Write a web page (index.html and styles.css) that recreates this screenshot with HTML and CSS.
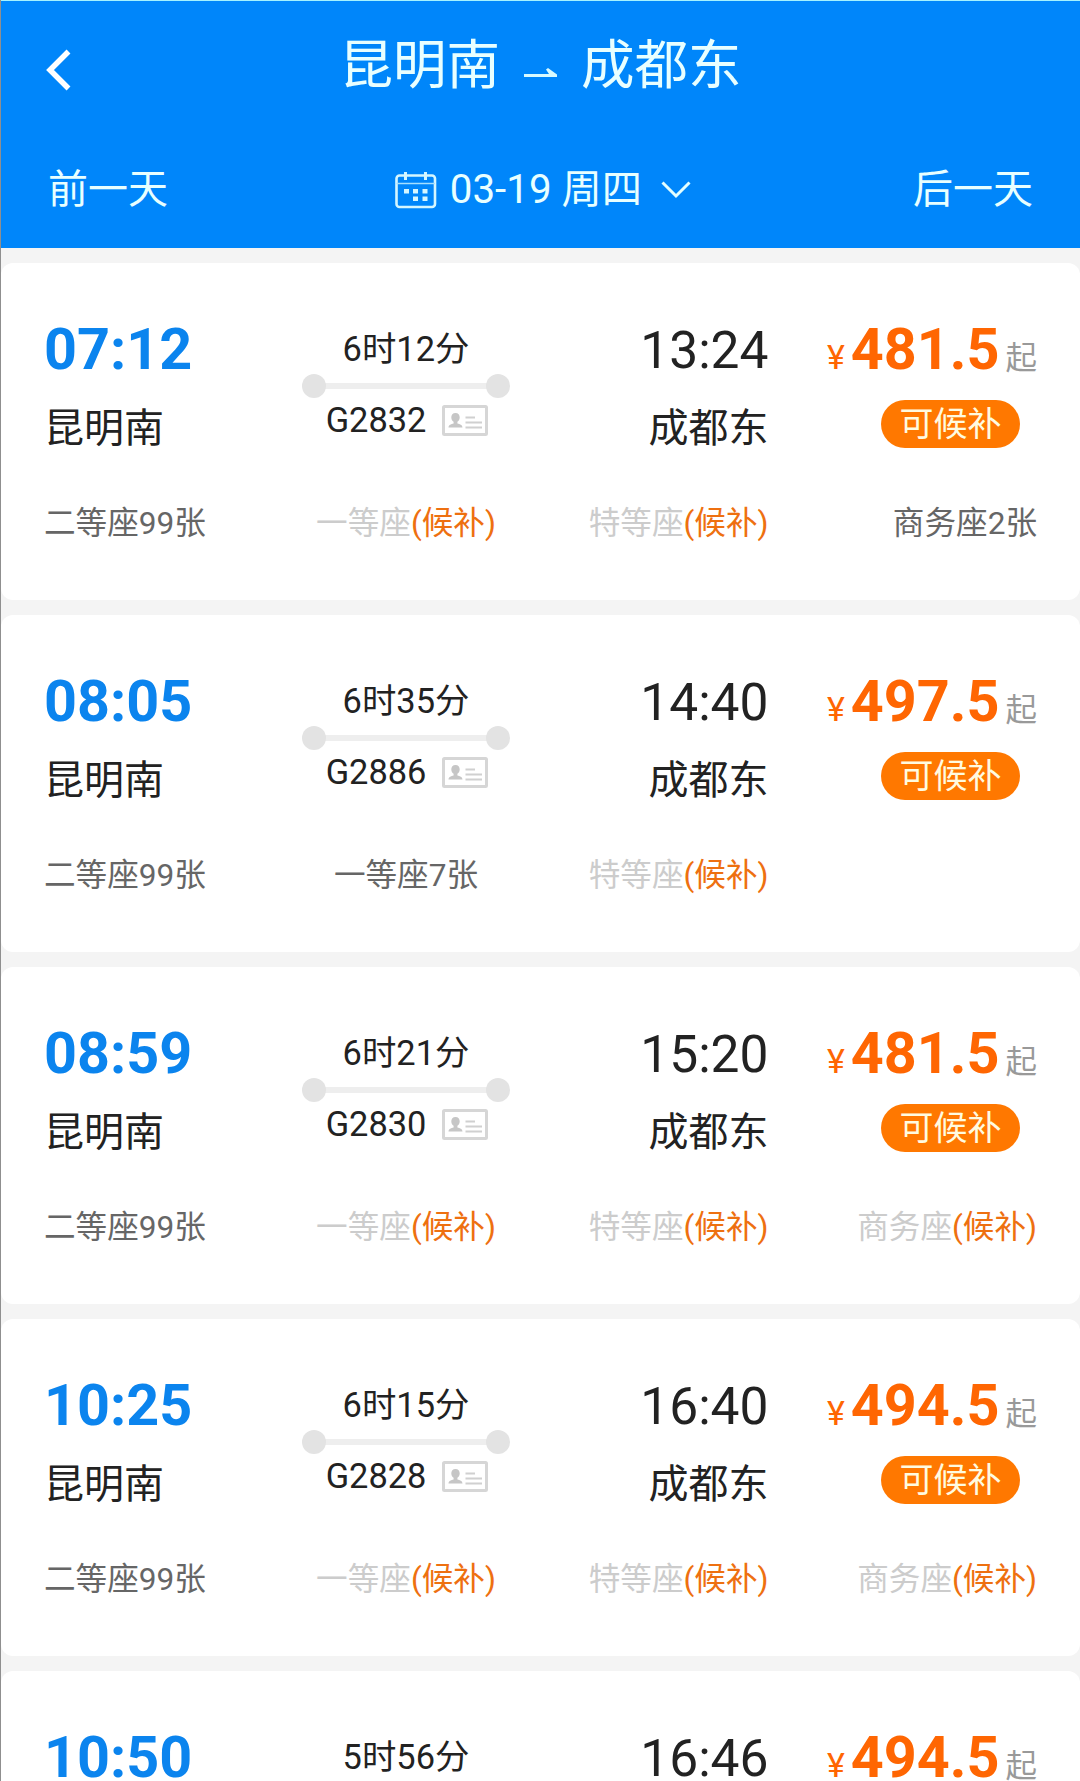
FILE: index.html
```html
<!DOCTYPE html>
<html lang="zh-CN">
<head>
    <meta charset="UTF-8">
    <meta name="viewport" content="width=device-width, initial-scale=1.0">
    <title>昆明南 - 成都东</title>
    <link rel="stylesheet" href="styles.css">
</head>
<body>
    <svg class="symbols" width="0" height="0">
        <symbol id="id-card" viewBox="0 0 46 31">
            <rect x="1.5" y="1.5" width="43" height="28" rx="1" fill="none" stroke="#d6d6d6" stroke-width="3"/>
            <path d="M13.5 8c-2.8 0-4.2 2-4.2 4.3 0 2 .9 3.7 2.3 4.5v1.7C9 19.2 6.5 20 6.5 22.5h14c0-2.5-2.5-3.3-5.1-4v-1.7c1.4-.8 2.3-2.5 2.3-4.5C17.7 10 16.3 8 13.5 8z" fill="#c6c6c6"/>
            <path d="M23.5 12.5h9.5M23.5 17.5h16.5M23.5 22.5h16.5" fill="none" stroke="#d0d0d0" stroke-width="2.2"/>
        </symbol>
    </svg>

    <div class="page">
        <header class="header">
            <div class="title-bar">
                <svg class="back" width="26" height="42" viewBox="0 0 26 42"><path d="M22.5 2.5L4 21l18.5 18.5" fill="none" stroke="#fff" stroke-width="5.5"/></svg>
                <h1 class="route">
                    <span>昆明南</span>
                    <svg class="arrow" width="33" height="10" viewBox="0 0 33 10"><path d="M0 6h25L22 1.5 24 0l9 6.5V9H0z" fill="#d8faff"/></svg>
                    <span>成都东</span>
                </h1>
            </div>
            <div class="date-bar">
                <span class="day">前一天</span>
                <div class="date">
                    <svg width="42" height="38" viewBox="0 0 42 38">
                        <rect x="1.5" y="4.5" width="38.5" height="31.5" rx="3" fill="none" stroke="#d4f6ff" stroke-width="2.6"/>
                        <path d="M1.5 12.5H40" stroke="#a5e0ff" stroke-width="1.5"/>
                        <path d="M10.5 1v8M30.5 1v8" stroke="#d4f6ff" stroke-width="3"/>
                        <path d="M9 18h5v4.5H9zM18 18h5v4.5h-5zM27.5 18h5v4.5h-5zM18 25.5h5V30h-5zM27.5 25.5h5V30h-5z" fill="#d4f6ff"/>
                    </svg>
                    <span class="date-text">03-19 周四</span>
                    <svg width="30" height="18" viewBox="0 0 30 18"><path d="M1.5 1.5L15 15 28.5 1.5" fill="none" stroke="#e4ffff" stroke-width="3"/></svg>
                </div>
                <span class="day">后一天</span>
            </div>
        </header>

        <main class="list">
            <div class="card">
                <div class="train">
                    <div class="depart">
                        <div class="time start">07:12</div>
                        <div class="station">昆明南</div>
                    </div>
                    <div class="trip">
                        <div class="duration">6时12分</div>
                        <div class="line"></div>
                        <div class="number">G2832 <svg width="46" height="31"><use href="#id-card"/></svg></div>
                    </div>
                    <div class="arrive">
                        <div class="time">13:24</div>
                        <div class="station">成都东</div>
                    </div>
                    <div class="fare">
                        <div class="price"><span class="yen">¥</span><b>481.5</b><span class="from">起</span></div>
                        <span class="badge">可候补</span>
                    </div>
                </div>
                <div class="seats">
                    <span>二等座99张</span>
                    <span class="none">一等座<em>(候补)</em></span>
                    <span class="none">特等座<em>(候补)</em></span>
                    <span>商务座2张</span>
                </div>
            </div>

            <div class="card">
                <div class="train">
                    <div class="depart">
                        <div class="time start">08:05</div>
                        <div class="station">昆明南</div>
                    </div>
                    <div class="trip">
                        <div class="duration">6时35分</div>
                        <div class="line"></div>
                        <div class="number">G2886 <svg width="46" height="31"><use href="#id-card"/></svg></div>
                    </div>
                    <div class="arrive">
                        <div class="time">14:40</div>
                        <div class="station">成都东</div>
                    </div>
                    <div class="fare">
                        <div class="price"><span class="yen">¥</span><b>497.5</b><span class="from">起</span></div>
                        <span class="badge">可候补</span>
                    </div>
                </div>
                <div class="seats">
                    <span>二等座99张</span>
                    <span>一等座7张</span>
                    <span class="none">特等座<em>(候补)</em></span>
                </div>
            </div>

            <div class="card">
                <div class="train">
                    <div class="depart">
                        <div class="time start">08:59</div>
                        <div class="station">昆明南</div>
                    </div>
                    <div class="trip">
                        <div class="duration">6时21分</div>
                        <div class="line"></div>
                        <div class="number">G2830 <svg width="46" height="31"><use href="#id-card"/></svg></div>
                    </div>
                    <div class="arrive">
                        <div class="time">15:20</div>
                        <div class="station">成都东</div>
                    </div>
                    <div class="fare">
                        <div class="price"><span class="yen">¥</span><b>481.5</b><span class="from">起</span></div>
                        <span class="badge">可候补</span>
                    </div>
                </div>
                <div class="seats">
                    <span>二等座99张</span>
                    <span class="none">一等座<em>(候补)</em></span>
                    <span class="none">特等座<em>(候补)</em></span>
                    <span class="none">商务座<em>(候补)</em></span>
                </div>
            </div>

            <div class="card">
                <div class="train">
                    <div class="depart">
                        <div class="time start">10:25</div>
                        <div class="station">昆明南</div>
                    </div>
                    <div class="trip">
                        <div class="duration">6时15分</div>
                        <div class="line"></div>
                        <div class="number">G2828 <svg width="46" height="31"><use href="#id-card"/></svg></div>
                    </div>
                    <div class="arrive">
                        <div class="time">16:40</div>
                        <div class="station">成都东</div>
                    </div>
                    <div class="fare">
                        <div class="price"><span class="yen">¥</span><b>494.5</b><span class="from">起</span></div>
                        <span class="badge">可候补</span>
                    </div>
                </div>
                <div class="seats">
                    <span>二等座99张</span>
                    <span class="none">一等座<em>(候补)</em></span>
                    <span class="none">特等座<em>(候补)</em></span>
                    <span class="none">商务座<em>(候补)</em></span>
                </div>
            </div>

            <div class="card">
                <div class="train">
                    <div class="depart">
                        <div class="time start">10:50</div>
                    </div>
                    <div class="trip">
                        <div class="duration">5时56分</div>
                    </div>
                    <div class="arrive">
                        <div class="time">16:46</div>
                    </div>
                    <div class="fare">
                        <div class="price"><span class="yen">¥</span><b>494.5</b><span class="from">起</span></div>
                    </div>
                </div>
            </div>
        </main>
    </div>
</body>
</html>
```

FILE: styles.css
```css
* {
    box-sizing: border-box;
}
body {
    margin: 0;
    background: #f4f4f4;
    color: #222;
    font-family: Roboto, "Noto Sans CJK SC", sans-serif;
}
svg {
    display: block;
    flex: none;
}
.symbols {
    display: none;
}
.page {
    width: 1080px;
    height: 1781px;
    overflow: hidden;
    border-left: 1px solid #8f8f8f;
}
.header {
    height: 248px;
    margin-left: -1px;
    background: #0086fa;
    border-top: 1px solid #a5f3ff;
    border-left: 1px solid #0a6fd0;
    color: #e8ffff;
}
.title-bar {
    display: grid;
    grid-template-columns: 300px 1fr 300px;
    height: 136px;
    padding-top: 30px;
}
.back {
    margin: 18px 0 0 45px;
}
.route {
    display: flex;
    justify-content: center;
    margin: 0;
    font-size: 53.5px;
    font-weight: 400;
    line-height: 70px;
    white-space: nowrap;
}
.arrow {
    margin: 37px 24px 0;
}
.date-bar {
    display: grid;
    grid-template-columns: 1fr auto 1fr;
    align-items: center;
    height: 106px;
    padding: 0 47px 0 47px;
    font-size: 40px;
    line-height: 50px;
}
.day:last-child {
    text-align: right;
}
.date {
    display: flex;
    align-items: center;
    padding-left: 5px;
}
.date-text {
    margin: 0 19px 0 13px;
    font-size: 40.3px;
}
.list {
    display: flex;
    flex-direction: column;
    gap: 15px;
    padding-top: 15px;
}
.card {
    height: 337px;
    padding: 57px 43px 0 43px;
    background: #fff;
    border-radius: 12px;
    flex: none;
}
.train, .seats {
    display: grid;
    grid-template-columns: 258px 208px 258.5px 268.5px;
}
.train {
    height: 184px;
}
.time {
    padding-top: 1px;
    font-size: 51.5px;
    line-height: 60px;
}
.start {
    padding-top: 0;
    padding-bottom: 1px;
    color: #0b84ee;
    font-size: 57.5px;
    font-weight: 700;
}
.station {
    margin-top: 18px;
    font-size: 40px;
    line-height: 60px;
}
.arrive {
    text-align: right;
}
.trip {
    text-align: center;
}
.duration {
    padding-top: 9px;
    font-size: 34.4px;
    line-height: 40px;
}
/* grey bar with a dot on both ends */
.line {
    display: flex;
    justify-content: space-between;
    align-items: center;
    height: 24px;
    margin-top: 5px;
    background: linear-gradient(#eee, #eee) center / 190px 6px no-repeat;
}
.line::before, .line::after {
    content: "";
    width: 24px;
    height: 24px;
    border-radius: 50%;
    background: #e3e3e3;
}
.number {
    display: flex;
    justify-content: center;
    align-items: center;
    gap: 16px;
    margin-top: 2px;
    padding-left: 2px;
    font-size: 34.4px;
    line-height: 40px;
}
.fare {
    display: flex;
    flex-direction: column;
    align-items: flex-end;
}
.price {
    display: flex;
    align-items: baseline;
    color: #ff6602;
    line-height: 60px;
}
.price b {
    font-size: 57.5px;
}
.yen {
    margin-right: 6px;
    font-size: 34px;
}
.from {
    margin-left: 6px;
    color: #999;
    font-size: 31.5px;
}
.badge {
    width: 139px;
    height: 48px;
    margin: 11px 17px 0 0;
    border-radius: 24px;
    background: #ff7800;
    color: #fffbe0;
    font-size: 34px;
    line-height: 48px;
    text-align: center;
}
.seats {
    color: #666;
    font-size: 31.6px;
    line-height: 40px;
    white-space: nowrap;
}
.seats span:nth-child(2) {
    justify-self: center;
}
.seats span:nth-child(n+3) {
    justify-self: end;
}
.none {
    color: #ccc;
}
.none em {
    color: #ee7010;
    font-style: normal;
}
```
